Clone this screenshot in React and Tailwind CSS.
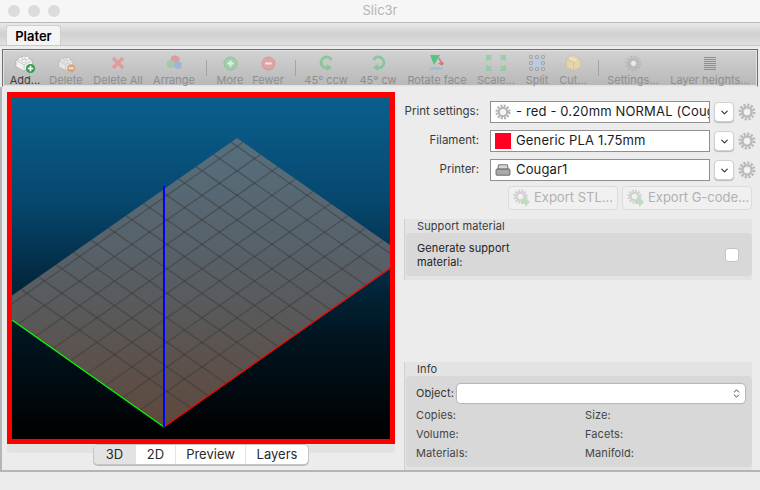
import React from "react";
import { ChevronDown, ChevronsUpDown } from "lucide-react";

const FONT = "font-['Inter','Liberation_Sans',sans-serif]";

const Gear = ({ size = 18, color = "#bababa", className = "" }) => (
  <svg width={size} height={size} viewBox="0 0 18 18" className={className}>
    <circle cx="9" cy="9" r="7" fill="none" stroke={color} strokeWidth="3" strokeDasharray="2.2 1.46" />
    <circle cx="9" cy="9" r="4.6" fill="none" stroke={color} strokeWidth="2.4" />
    <circle cx="9" cy="9" r="2.6" fill="#f4f4f4" />
  </svg>
);

const Brick = ({ badge, size }) => (
  <svg width={size} height={size} viewBox="0 0 24 24">
    <path d="M2 9 L11 4 L20 9 V16 L11 21 L2 16 Z" fill="#f1f1f1" stroke="#a8a8a8" strokeWidth="0.8" />
    <path d="M2 9 L11 14 L20 9 M11 14 V21" fill="none" stroke="#c0c0c0" strokeWidth="0.8" />
    <ellipse cx="7" cy="7.5" rx="2.4" ry="1.6" fill="#fff" stroke="#aaa" strokeWidth="0.6" />
    <ellipse cx="14" cy="6.5" rx="2.4" ry="1.6" fill="#fff" stroke="#aaa" strokeWidth="0.6" />
    <ellipse cx="11" cy="10" rx="2.4" ry="1.6" fill="#fff" stroke="#aaa" strokeWidth="0.6" />
    {badge === "add" && <><circle cx="18" cy="18" r="5" fill="#2fa24e" /><path d="M15 18h6M18 15v6" stroke="#fff" strokeWidth="1.8" /></>}
    {badge === "del" && <><circle cx="18" cy="18" r="5" fill="#e09a62" /><path d="M15 18h6" stroke="#fff" strokeWidth="1.8" /></>}
  </svg>
);

const Cross = () => (
  <svg width="14" height="14" viewBox="0 0 14 14">
    <path d="M2 2 L12 12 M12 2 L2 12" stroke="#e88f8f" strokeWidth="3.4" />
  </svg>
);

const RoundBadge = ({ fill, plus }) => (
  <svg width="15" height="15" viewBox="0 0 18 18">
    <circle cx="9" cy="9" r="8" fill={fill} stroke="#00000022" />
    <path d={plus ? "M5 9h8M9 5v8" : "M5 9h8"} stroke="#f4f4f4" strokeWidth="2.4" />
  </svg>
);

const Turn = ({ flip }) => (
  <svg width="15" height="16" viewBox="0 0 15 16">
    <g transform={flip ? "translate(15 0) scale(-1 1)" : undefined} fill="#74c68a">
      <path d="M12.5 5 A5.5 5.5 0 1 0 8 13" fill="none" stroke="#74c68a" strokeWidth="2.8" />
      <path d="M8 9 L13 12.5 L8 16 Z" />
    </g>
  </svg>
);

const Arrange = () => (
  <svg width="17" height="16" viewBox="0 0 24 22">
    <path d="M7 2 L13 0 L19 3 V9 L13 12 L7 9 Z" fill="#e58b8b" />
    <path d="M1 9 L7 6 L12 9 V16 L7 19 L1 16 Z" fill="#9cc9a0" />
    <path d="M11 11 L17 8 L22 11 V17 L17 20 L11 17 Z" fill="#8fb1d8" />
  </svg>
);

const RotateFace = () => (
  <svg width="16" height="16" viewBox="0 0 16 16">
    <path d="M1 0 H11 L5 10 Z" fill="#2fc266" />
    <path d="M2 12 H13 L15 15 H0 Z" fill="#8ec3de" />
    <path d="M10 3 L13 9 M13 10 l-3 -2 M13 10 l1 -3" stroke="#d9555c" strokeWidth="1.5" fill="none" />
  </svg>
);

const Scale = () => (
  <svg width="22" height="18" viewBox="0 0 22 18" fill="#86cf9d">
    <path d="M1 1h6v1.500l-2 .5 2 2-2 2-2-2-.5 2H1z" />
    <path d="M21 1h-6v1.500l2 .5-2 2 2 2 2-2 .5 2H21z" />
    <path d="M1 17h6v-1.500l-2-.5 2-2-2-2-2 2-.5-2H1z" />
    <path d="M21 17h-6v-1.500l2-.5-2-2 2-2 2 2 .5-2H21z" />
  </svg>
);

const Split = () => (
  <svg width="16" height="16" viewBox="0 0 16 16">
    <rect x="2" y="2" width="12" height="12" fill="#b9cbe6" />
    {[[2, 2], [8, 2], [14, 2], [2, 14], [8, 14], [14, 14], [2, 8], [14, 8]].map(([x, y]) => (
      <rect key={`${x}-${y}`} x={x - 1.2} y={y - 1.2} width="2.4" height="2.4" fill="#ddd" stroke="#666" strokeWidth="0.6" />
    ))}
  </svg>
);

const Cut = () => (
  <svg width="17" height="18" viewBox="0 0 22 22">
    <path d="M11 1 L20 6 V16 L11 21 L2 16 V6 Z" fill="#f0d9a4" stroke="#d5b878" strokeWidth="0.8" />
    <path d="M2 6 L11 11 L20 6 M11 11 V21" fill="none" stroke="#d5b878" strokeWidth="0.8" />
    <path d="M6 3.500 L15 8.500" stroke="#fbf1d8" strokeWidth="2" />
  </svg>
);

const Layers = () => (
  <svg width="12" height="13" viewBox="0 0 12 13" stroke="#7d7d7d" strokeWidth="1">
    {[0, 2, 4, 6, 8, 10, 12].map((y) => <path key={y} d={`M0 ${y + 0.5}h12`} />)}
  </svg>
);

const Printer = () => (
  <svg width="16" height="14" viewBox="0 0 18 16">
    <path d="M4 2h10l1 5H3z" fill="#d5d5d5" stroke="#555" strokeWidth="0.9" />
    <rect x="1" y="7" width="16" height="7" rx="1" fill="#a9a9a9" stroke="#555" strokeWidth="0.9" />
  </svg>
);

const TOOLS = [
  { label: "Add...", w: "w-[38px]", icon: <Brick badge="add" size={22} />, on: true },
  { label: "Delete", w: "w-[44px]", icon: <Brick badge="del" size={19} /> },
  { label: "Delete All", w: "w-[60px]", icon: <Cross /> },
  { label: "Arrange", w: "w-[52px]", icon: <Arrange /> },
  { sep: true, w: "w-[12px]" },
  { label: "More", w: "w-[36px]", icon: <RoundBadge fill="#8fd29d" plus /> },
  { label: "Fewer", w: "w-[40px]", icon: <RoundBadge fill="#ec9696" /> },
  { sep: true, w: "w-[14px]" },
  { label: "45° ccw", w: "w-[48px]", icon: <Turn /> },
  { label: "45° cw", w: "w-[56px]", icon: <Turn flip /> },
  { label: "Rotate face", w: "w-[62px]", icon: <RotateFace /> },
  { label: "Scale...", w: "w-[56px]", icon: <Scale /> },
  { label: "Split", w: "w-[26px]", icon: <Split /> },
  { label: "Cut...", w: "w-[46px]", icon: <Cut /> },
  { sep: true, w: "w-[4px]" },
  { label: "Settings...", w: "w-[66px]", icon: <Gear size={17} color="#b4b4b4" /> },
  { label: "Layer heights...", w: "w-[88px]", icon: <Layers /> },
];

function Toolbar() {
  return (
    <div className="mx-[2px] mt-[3px] h-[38px] border border-[#6f6f6f] border-b-[#e8e8e8] bg-gradient-to-b from-[#d2d2d2] to-[#b8b8b8] flex items-stretch pl-[3px] shadow-[inset_0_0_0_1px_#e2e2e2]">
      {TOOLS.map((t, i) =>
        t.sep ? (
          <div key={i} className={`${t.w} flex items-center justify-center shrink-0`}>
            <div className="w-px h-[16px] bg-[#a3a3a3]" />
          </div>
        ) : (
          <div key={t.label} className={`${t.w} flex flex-col items-center shrink-0`}>
            <div className={`h-[22px] mt-[2px] flex items-center justify-center ${t.on ? "" : "opacity-75"}`}>{t.icon}</div>
            <div className={`text-[11px] leading-[12px] whitespace-nowrap ${t.on ? "text-[#3c3c3c]" : "text-[#8e8e8e]"}`}>{t.label}</div>
          </div>
        )
      )}
    </div>
  );
}

function Plate() {
  const B = [164, 427];
  const step = 17.5;
  const lines = [];
  for (let p = 27; p <= 237; p += step) {
    const x = B[0] + p, y = B[1] - p * 0.7;
    lines.push([x, y, x - 170, y - 119]);
  }
  for (let p = 24; p <= 164; p += step) {
    const x = B[0] - p, y = B[1] - p * 0.7;
    lines.push([x, y, x + 243, y - 170]);
  }
  return (
    <svg width="378" height="342" viewBox="12 97 378 342" className="block">
      <defs>
        <linearGradient id="plate" gradientUnits="userSpaceOnUse" x1="0" y1="138" x2="0" y2="427">
          <stop offset="0" stopColor="#566f7e" />
          <stop offset="0.5" stopColor="#585d62" />
          <stop offset="1" stopColor="#5f483c" />
        </linearGradient>
      </defs>
      <polygon points="164,427 407,257 237,138 -6,308" fill="url(#plate)" />
      {lines.map(([a, b, c, d], i) => (
        <line key={i} x1={a} y1={b} x2={c} y2={d} stroke="#353535" strokeOpacity="0.45" strokeWidth="1.3" />
      ))}
      <line x1="12" y1="320" x2="164" y2="427" stroke="#00ff00" strokeWidth="1.3" />
      <line x1="164" y1="427" x2="390" y2="268" stroke="#ff0000" strokeWidth="1.3" />
      <line x1="164" y1="186" x2="164" y2="427" stroke="#0000ff" strokeWidth="2" />
    </svg>
  );
}

const VIEWS = [
  { label: "3D", w: "w-[41px]", on: true },
  { label: "2D", w: "w-[40px]" },
  { label: "Preview", w: "w-[70px]" },
  { label: "Layers", w: "w-[63px]" },
];

function LeftPanel() {
  return (
    <div className="w-[388px] ml-[5px] mr-[9px] pt-[5px] shrink-0">
      <div className="h-[352px] border-[5px] border-[#ff0000] bg-[linear-gradient(180deg,#0a5f8e_0%,#06486f_30%,#02253a_56%,#00141f_71%,#000000_100%)]">
        <Plate />
      </div>
      <div className="h-[9px] bg-[#e2e2e2] rounded-b-[4px]" />
      <div className="flex justify-center -mt-[9px] relative">
        <div className="flex h-[21px] rounded-[5px] border border-[#c6c6c6] bg-white overflow-hidden text-[13px] leading-[19px] text-[#2a2a2a] text-center shadow-[0_1px_0_#bbb]">
          {VIEWS.map((v) => (
            <div key={v.label} className={`${v.w} ${v.on ? "bg-[#e3e3e3]" : "border-l border-[#e4e4e4]"}`}>{v.label}</div>
          ))}
        </div>
      </div>
    </div>
  );
}

function PresetRow({ label, icon, text }) {
  return (
    <div className="flex items-center h-[22px]">
      <div className="w-[75px] shrink-0 text-right text-[11.5px] text-[#3a3a3a] whitespace-nowrap">{label}</div>
      <div className="ml-[11px] w-[220px] shrink-0 h-[22px] bg-white border border-[#8f8f8f] flex items-center pl-[4px] overflow-hidden">
        <div className="w-[16px] flex justify-center shrink-0">{icon}</div>
        <div className="ml-[5px] text-[13px] tracking-[0.15px] text-[#1c1c1c] whitespace-nowrap">{text}</div>
      </div>
      <div className="ml-[4px] w-[20px] h-[20px] shrink-0 bg-white rounded-[4px] border border-[#d0d0d0] shadow-[0_1px_1px_#bbb] flex items-center justify-center">
        <ChevronDown size={11} strokeWidth={2.5} color="#333" />
      </div>
      <Gear size={18} className="ml-[4px] shrink-0" />
    </div>
  );
}

const ExportIcon = () => (
  <div className="relative w-[18px] h-[18px] opacity-70">
    <Gear size={15} color="#c4c4c4" />
    <svg width="10" height="10" viewBox="0 0 10 10" className="absolute right-0 bottom-0">
      <path d="M0 3h4V0l5 5-5 5V7H0z" fill="#a6d9a6" />
    </svg>
  </div>
);

function Fieldset({ title, className, children }) {
  return (
    <div className={`w-[348px] bg-[#e3e3e3] border-l border-[#d0d0d0] pl-[1px] ${className}`}>
      <div className="h-[14px] pl-[11px] text-[11px] tracking-[0.1px] leading-[14px] text-[#3a3a3a]">{title}</div>
      {children}
    </div>
  );
}

function RightPanel() {
  return (
    <div className="w-[354px] pt-[14px] flex flex-col h-full shrink-0">
      <div className="flex flex-col gap-[7px]">
        <PresetRow label="Print settings:" icon={<Gear size={16} color="#b5b5b5" />} text="- red - 0.20mm NORMAL (Coug" />
        <PresetRow label="Filament:" icon={<div className="w-[16px] h-[16px] bg-[#ff0022]" />} text="Generic PLA 1.75mm" />
        <PresetRow label="Printer:" icon={<Printer />} text="Cougar1" />
      </div>
      <div className="w-[348px] flex justify-end gap-[4px] mt-[5px]">
        <div className="w-[110px] h-[24px] rounded-[4px] border border-[#dcdcdc] bg-[#f0f0f0] flex items-center pl-[4px] gap-[3px] text-[13px] text-[#b0b0b0] whitespace-nowrap">
          <ExportIcon />Export STL...
        </div>
        <div className="w-[130px] h-[24px] rounded-[4px] border border-[#dcdcdc] bg-[#f0f0f0] flex items-center pl-[4px] gap-[3px] text-[13px] text-[#b0b0b0] whitespace-nowrap">
          <ExportIcon />Export G-code...
        </div>
      </div>
      <Fieldset title="Support material" className="mt-[9px] h-[61px]">
        <div className="h-[43px] bg-[#d8d8d8] rounded-[4px] flex items-center pl-[11px] pr-[13px] justify-between">
          <div className="text-[11px] tracking-[0.1px] leading-[14px] text-[#222] w-[110px]">Generate support material:</div>
          <div className="w-[14px] h-[14px] bg-white rounded-[3px] border border-[#c4c4c4]" />
        </div>
      </Fieldset>
      <Fieldset title="Info" className="mt-auto h-[108px]">
        <div className="h-[91px] bg-[#d8d8d8] rounded-[4px] pl-[10px] pr-[7px] pt-[8px]">
          <div className="flex items-center h-[19px]">
            <div className="w-[41px] text-[11px] tracking-[0.1px] text-[#333]">Object:</div>
            <div className="flex-1 h-[19px] bg-white rounded-[4px] shadow-[0_0_1px_1px_#b5b5b5] flex items-center justify-end pr-[3px]">
              <ChevronsUpDown size={11} strokeWidth={2} color="#333" />
            </div>
          </div>
          <div className="mt-[3px] grid grid-cols-[169px_1fr] text-[11px] tracking-[0.1px] leading-[19px] text-[#444]">
            {["Copies:", "Size:", "Volume:", "Facets:", "Materials:", "Manifold:"].map((s) => <div key={s}>{s}</div>)}
          </div>
        </div>
      </Fieldset>
    </div>
  );
}

export default function App() {
  return (
    <div className={`w-[760px] h-[490px] bg-[#ececec] overflow-hidden flex flex-col ${FONT}`}>
      <div className="h-[22px] bg-[#f6f6f6] relative flex items-center justify-center text-[13px] text-[#b4b4b4]">
        <div className="absolute left-[8px] top-[5px] flex gap-[8px]">
          <div className="w-[12px] h-[12px] rounded-full bg-[#dcdcdc]" />
          <div className="w-[12px] h-[12px] rounded-full bg-[#dcdcdc]" />
          <div className="w-[12px] h-[12px] rounded-full bg-[#dcdcdc]" />
        </div>
        Slic3r
      </div>
      <div className="h-[24px] border-t border-[#b9b9b9] bg-gradient-to-b from-[#e9e9e9] via-[#d0d0d0] to-[#e0e0e0] flex items-end pl-[6px] border-b border-b-[#c8c8c8]">
        <div className="w-[55px] h-[20px] bg-[#f4f4f4] rounded-t-[3px] border border-b-0 border-[#cfcfcf] text-center text-[13px] leading-[20px] font-semibold text-black">Plater</div>
      </div>
      <Toolbar />
      <div className="h-[385px] flex border-b-2 border-[#b5b5b5] border-l-2">
        <LeftPanel />
        <RightPanel />
      </div>
    </div>
  );
}
